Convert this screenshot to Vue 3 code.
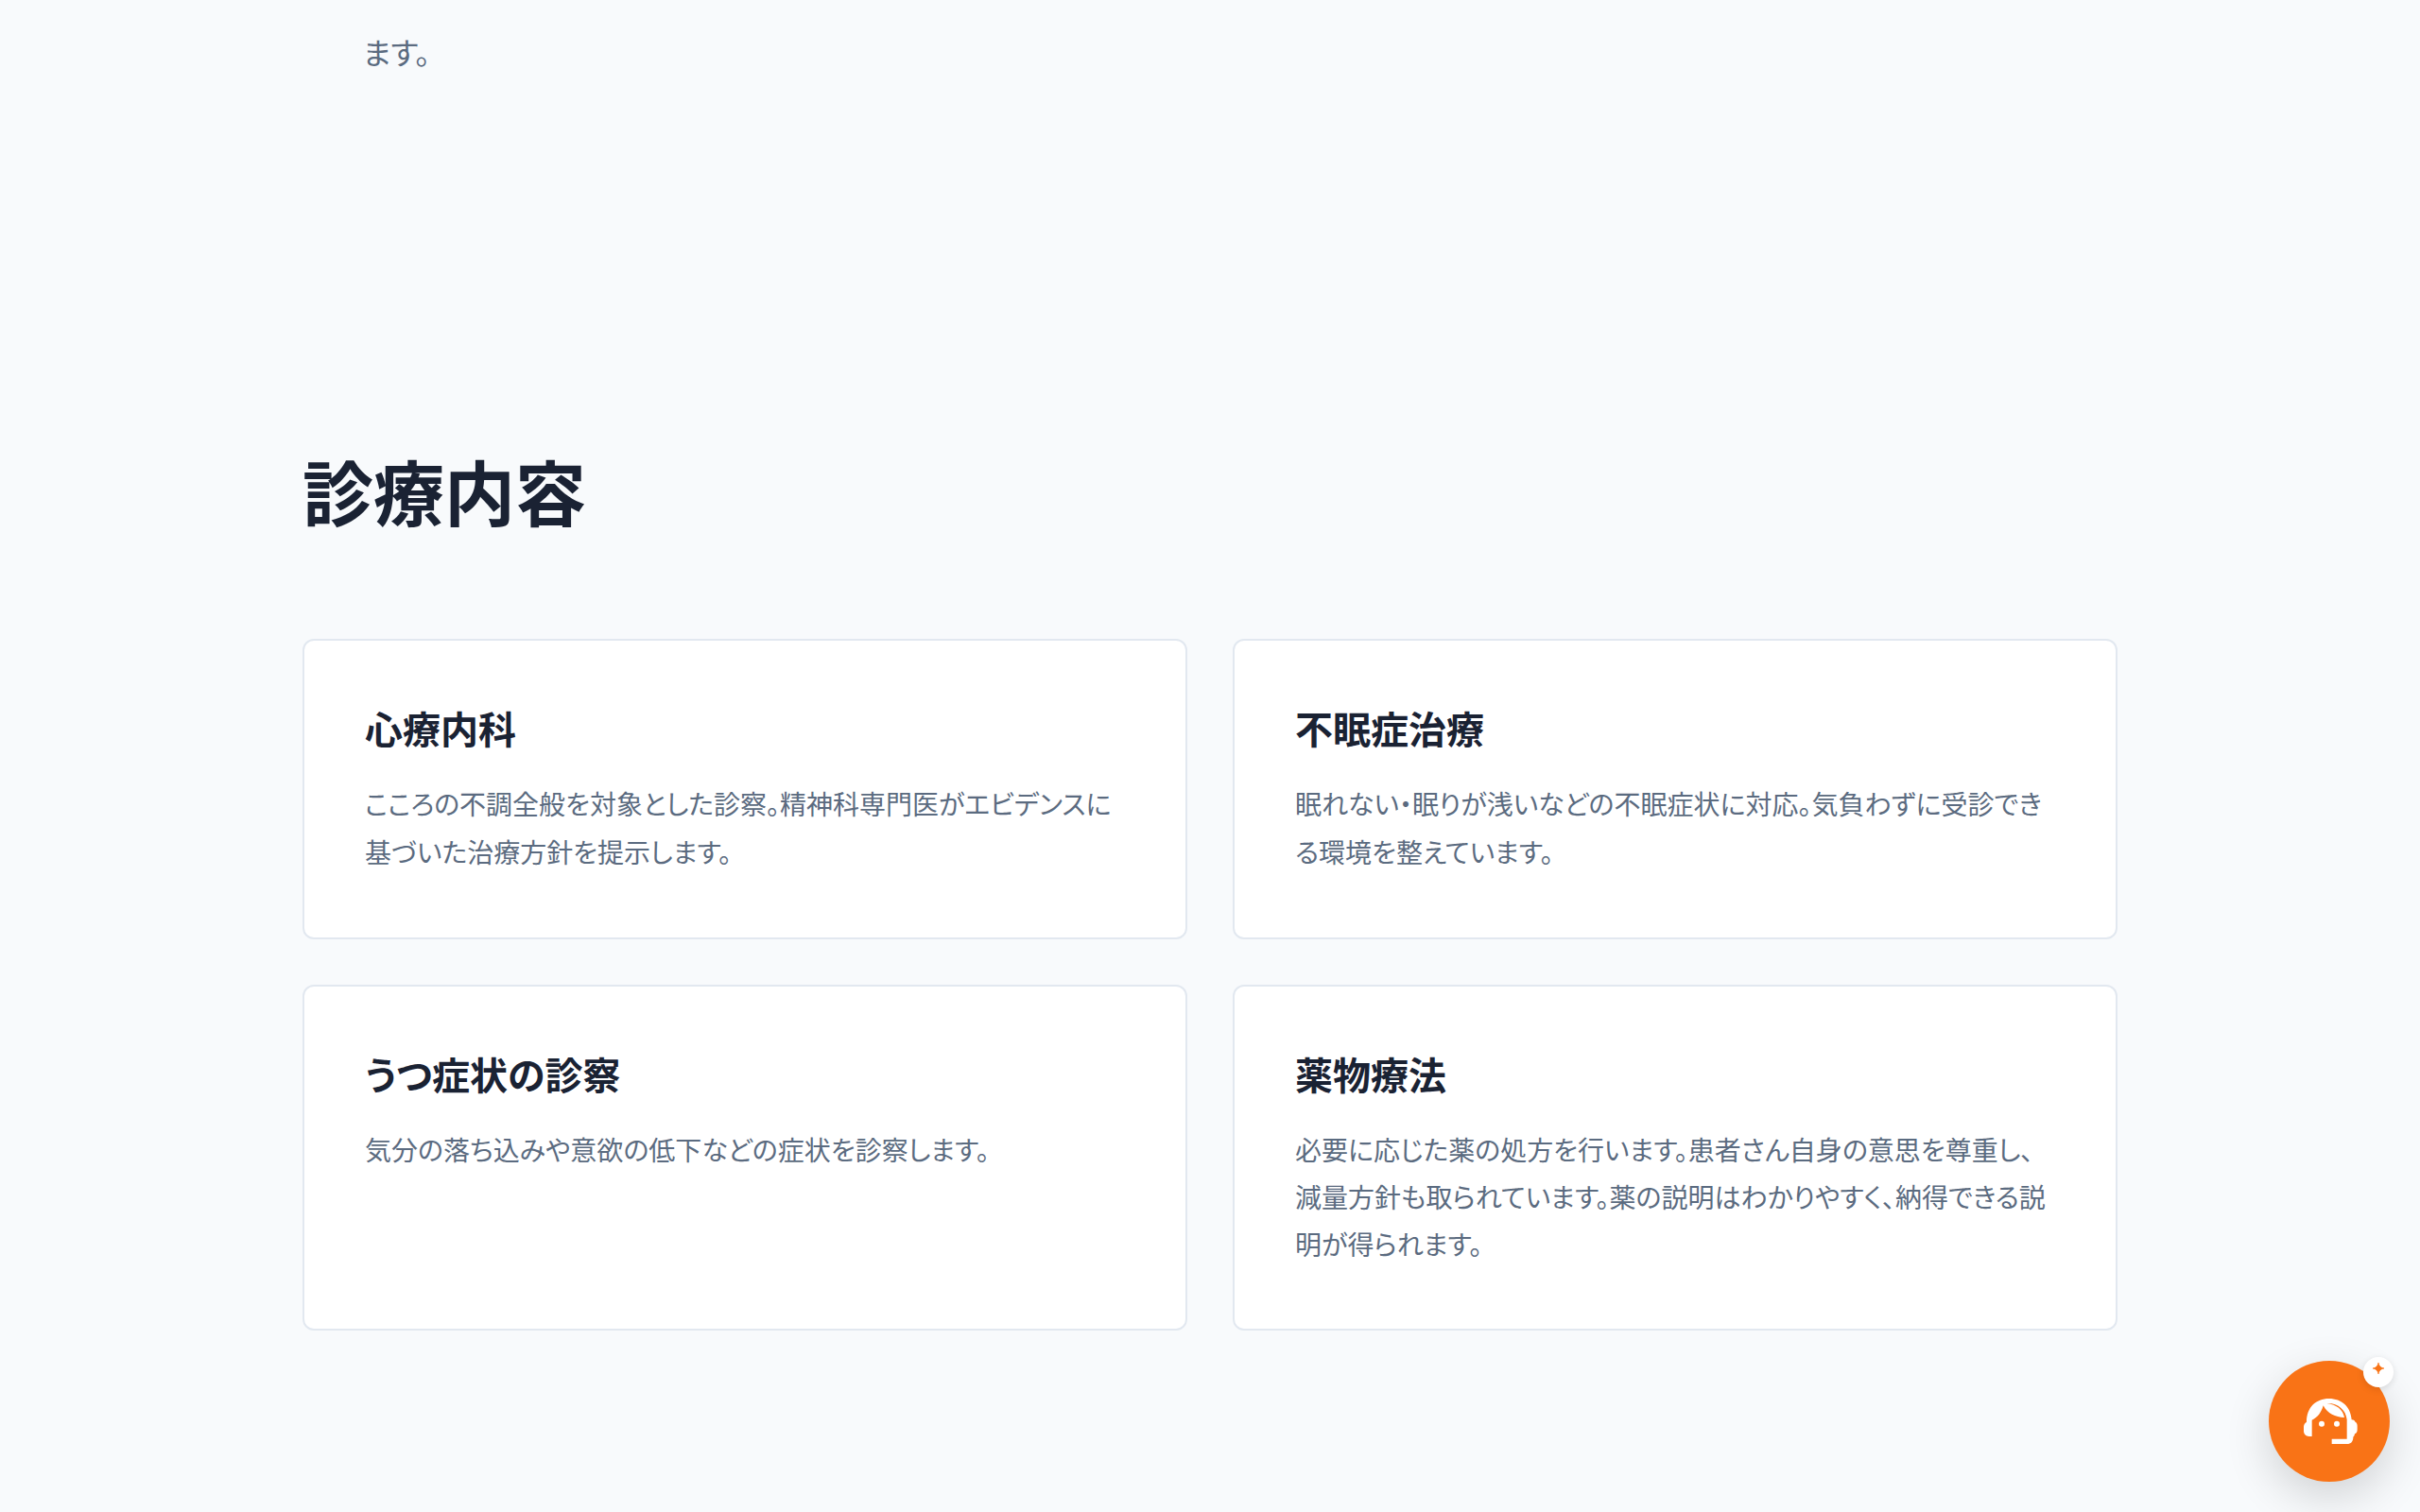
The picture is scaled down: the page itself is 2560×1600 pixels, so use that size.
<script setup>
const services = [
  { title: '心療内科', text: 'こころの不調全般を対象とした診察。精神科専門医がエビデンスに基づいた治療方針を提示します。' },
  { title: '不眠症治療', text: '眠れない・眠りが浅いなどの不眠症状に対応。気負わずに受診できる環境を整えています。' },
  { title: 'うつ症状の診察', text: '気分の落ち込みや意欲の低下などの症状を診察します。' },
  { title: '薬物療法', text: '必要に応じた薬の処方を行います。患者さん自身の意思を尊重し、減量方針も取られています。薬の説明はわかりやすく、納得できる説明が得られます。', dense: true }
]
</script>

<template>
  <main class="page">
    <p class="lead">ます。</p>
    <section class="services" aria-labelledby="services-title">
      <h2 id="services-title" class="heading">診療内容</h2>
      <div class="grid">
        <article v-for="item in services" :key="item.title" class="card">
          <h3 class="card-title">{{ item.title }}</h3>
          <p class="card-text" :class="{ dense: item.dense }">{{ item.text }}</p>
        </article>
      </div>
    </section>
    <button class="chat" type="button" aria-label="チャットで相談">
      <svg class="agent" viewBox="0 0 204 192" aria-hidden="true">
        <g fill="#fff">
          <path d="M47 144H38C28 144 21 137 21 127V113C21 106 25 101 30 98C30 52 60 24 101 24C142 24 170 50 173 91C181 91 183 94 183 97C188 99 191 104 191 110V122C191 130 188 134 183 136C182 142 180 144 178 146C178 160 171 168 158 168H110V152H158V91C155 60 130 38 95 39C125 43 146 59 150 84C122 84 96 71 83 46C77 68 65 84 47 92Z" />
          <circle cx="78" cy="104" r="9" />
          <circle cx="126" cy="104" r="9" />
        </g>
      </svg>
      <span class="badge">
        <svg class="spark" viewBox="0 0 12 12" aria-hidden="true">
          <path d="M6 0Q6.8 5.2 12 6Q6.8 6.8 6 12Q5.2 6.8 0 6Q5.2 5.2 6 0Z" fill="#f97316" stroke="#f97316" stroke-width="0.6" />
        </svg>
      </span>
    </button>
  </main>
</template>

<style>
body {
  background: #f8fafc;
}
</style>

<style scoped>
.page {
  box-sizing: border-box;
  max-width: 1984px;
  min-height: 100vh;
  margin: 0 auto;
  padding: 28px 32px 192px;
  color: #1a2233;
  font-family: "Noto Sans CJK JP", sans-serif;
  font-feature-settings: "palt";
}
.lead {
  margin: 0;
  padding: 0 64px;
  color: #5b6b80;
  font-size: 32px;
  line-height: 52px;
}
.services {
  padding-top: 384px;
}
.heading {
  margin: 0 0 102px;
  font-size: 75px;
  font-weight: 700;
  line-height: 110px;
}
.grid {
  display: grid;
  grid-template-columns: 1fr 1fr;
  gap: 48px;
}
.card {
  padding: 62px 64px 65px;
  border: 2px solid #e2e8f0;
  border-radius: 12px;
  background: #fff;
}
.card-title {
  margin: 0 0 25px;
  font-size: 40px;
  font-weight: 700;
  line-height: 60px;
}
.card-text {
  margin: 0;
  color: #5b6b80;
  font-size: 28px;
  line-height: 51px;
}
.card-text.dense {
  line-height: 50px;
}
.chat {
  position: fixed;
  right: 32px;
  bottom: 32px;
  display: grid;
  place-items: center;
  width: 128px;
  height: 128px;
  padding: 0;
  border: 0;
  border-radius: 50%;
  background: #f97316;
  box-shadow: 0 16px 48px rgba(0, 0, 0, 0.16);
}
.agent {
  width: 68px;
  height: 64px;
}
.badge {
  position: absolute;
  top: -4px;
  right: -4px;
  box-sizing: border-box;
  display: grid;
  place-items: center;
  width: 32px;
  height: 32px;
  padding-bottom: 8px;
  border-radius: 50%;
  background: #fff;
  box-shadow: 0 2px 8px rgba(0, 0, 0, 0.12);
}
.spark {
  width: 12px;
  height: 12px;
}
</style>
